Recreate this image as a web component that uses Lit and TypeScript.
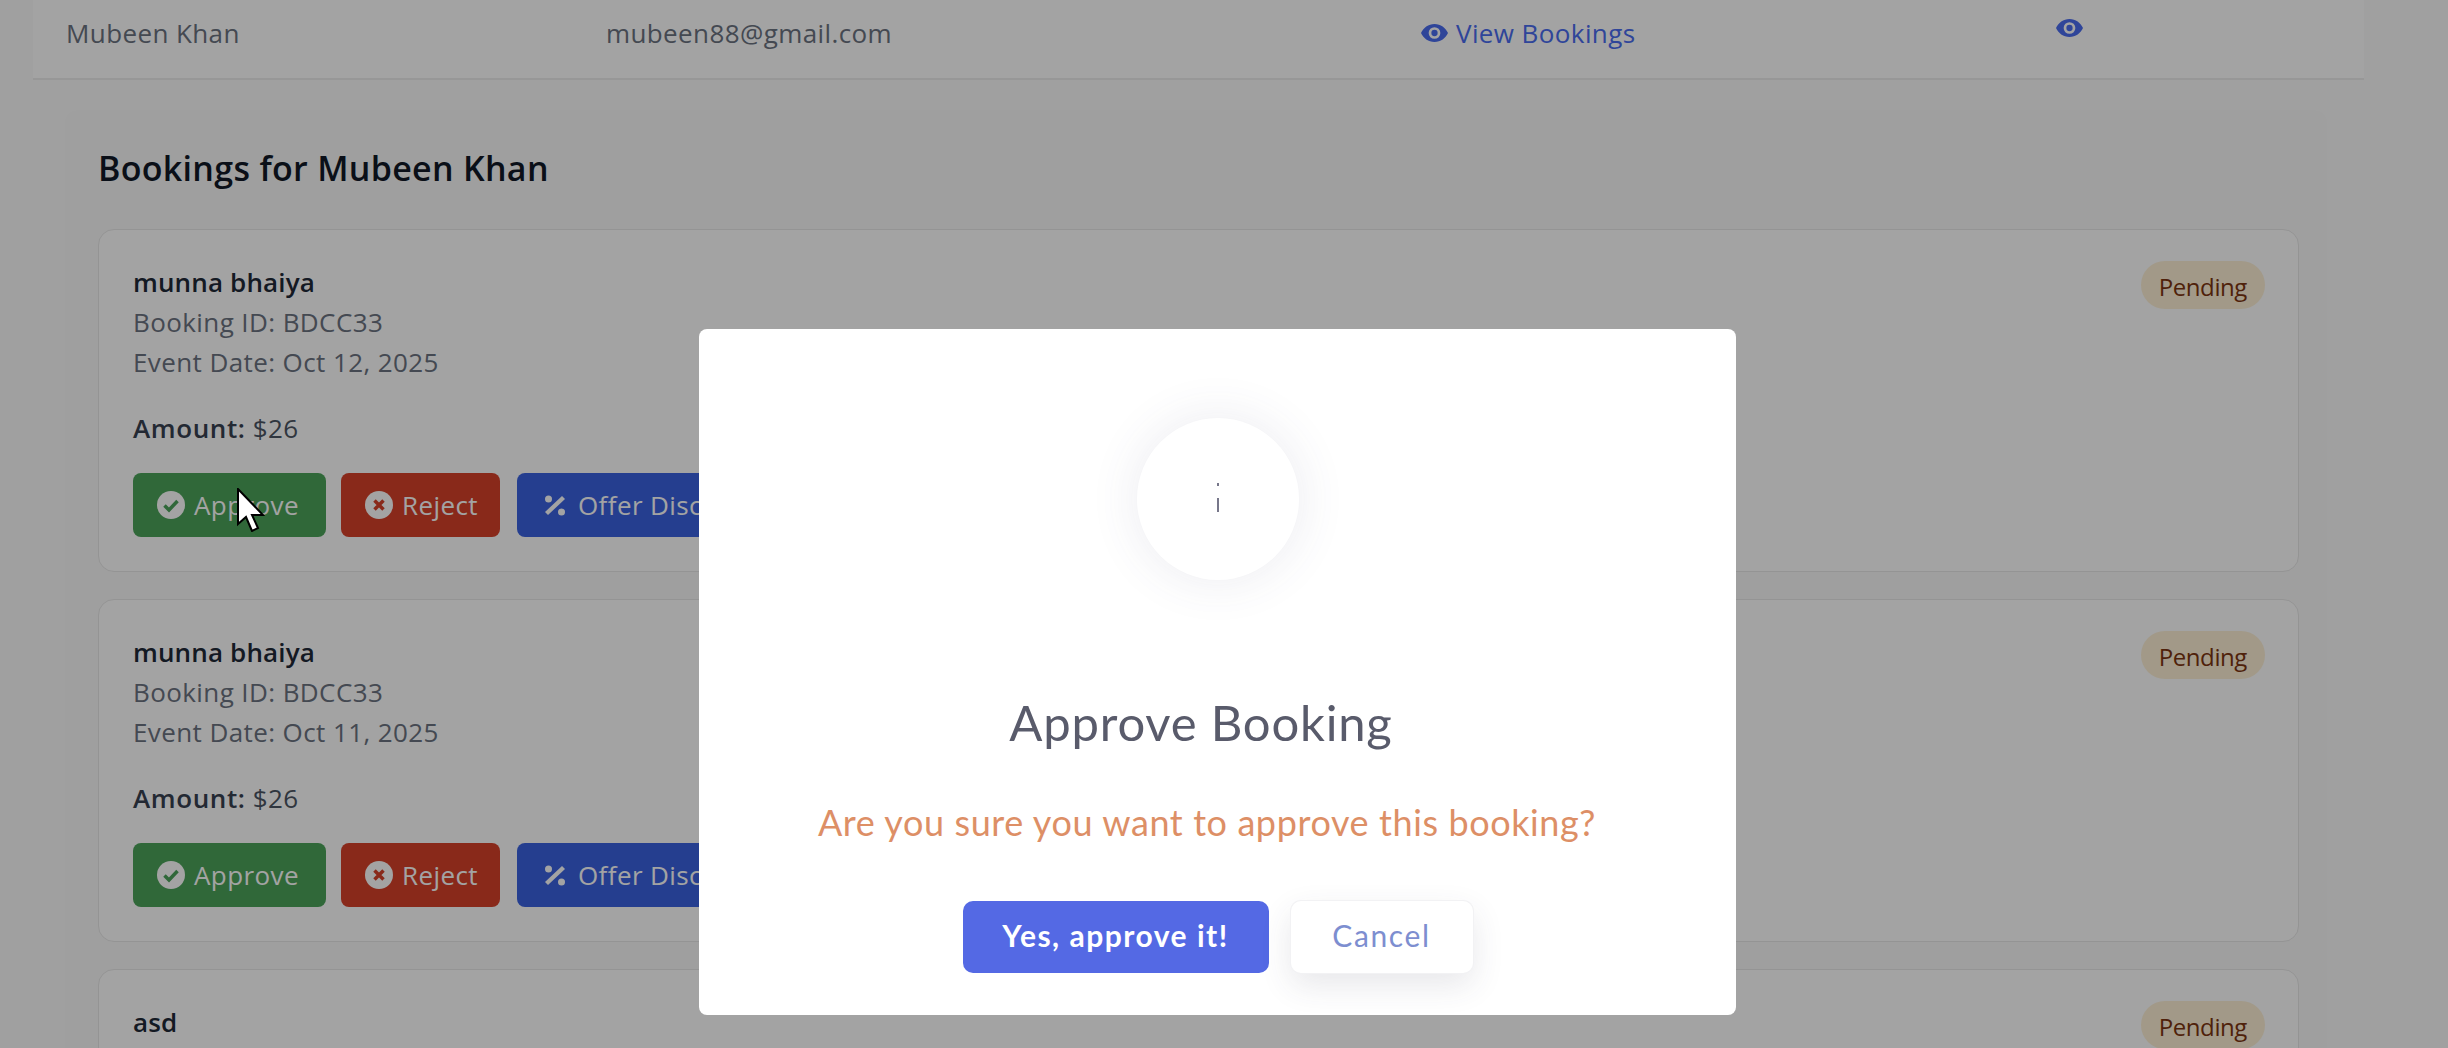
import { LitElement, html, css, svg } from 'lit';
import { customElement } from 'lit/decorators.js';

const eye = svg`<path fill-rule="evenodd" d="M12 0C6.5 0 2 3.4 0 8c2 4.6 6.500 8 12 8s10-3.400 12-8c-2-4.600-6.500-8-12-8zm0 2.800a5.200 5.200 0 1 1 0 10.400 5.200 5.200 0 0 1 0-10.400z"/><circle cx="12" cy="8" r="2.800"/>`;

const bookings = [
  { name: 'munna bhaiya', id: 'BDCC33', date: 'Oct 12, 2025', amount: '$26' },
  { name: 'munna bhaiya', id: 'BDCC33', date: 'Oct 11, 2025', amount: '$26' },
];

@customElement('app-root')
export class AppRoot extends LitElement {
  static override styles = css`
    :host {
      display: block;
      position: relative;
      height: 1048px;
      overflow: hidden;
      background: #fbfbfb;
      font-family: 'Open Sans', 'Noto Sans', sans-serif;
      font-size: 26px;
      letter-spacing: 0.4px;
    }
    .table {
      margin-left: 33px;
      width: 2331px;
    }
    .row {
      display: grid;
      grid-template-columns: 540px 815px 635px 1fr;
      height: 80px;
      padding: 0 0 12px 33px;
      align-items: center;
      background: #fff;
      border-bottom: 2px solid #ececec;
      box-sizing: border-box;
      color: #6b7280;
    }
    .link {
      display: flex;
      align-items: center;
      gap: 8px;
      color: #4a6cf0;
    }
    .eye {
      width: 27px;
      height: 18px;
      fill: #4a6cf0;
    }
    .row .lone {
      margin-top: -10px;
      display: flex;
    }
    .panel {
      margin: 30px 0 0 32px;
      width: 2262px;
      padding: 33px 33px 0;
      box-sizing: border-box;
      background: #f9f9f9;
      border-radius: 12px;
    }
    h2 {
      margin: 0 0 36px;
      font-size: 34px;
      line-height: 50px;
      font-weight: 600;
      letter-spacing: 0.3px;
      color: #111827;
    }
    .cards {
      display: flex;
      flex-direction: column;
      gap: 27px;
      width: 2201px;
    }
    .card {
      display: flex;
      justify-content: space-between;
      align-items: flex-start;
      padding: 32px 34px 34px;
      background: #fff;
      border: 1px solid #e8e8e8;
      border-radius: 16px;
      line-height: 40px;
      box-sizing: border-box;
      color: #6b7280;
    }
    .name {
      font-weight: 600;
      letter-spacing: 0.15px;
      color: #1f2937;
    }
    .amount {
      margin-top: 26px;
      color: #4b5563;
    }
    .amount b {
      font-weight: 600;
      letter-spacing: 0.6px;
      color: #374151;
    }
    .actions {
      display: flex;
      gap: 14px;
      margin-top: 25px;
    }
    .btn {
      display: flex;
      align-items: center;
      gap: 9px;
      height: 64px;
      padding: 0 24px;
      border-radius: 8px;
      color: #fff;
      box-sizing: border-box;
      white-space: nowrap;
    }
    .btn svg {
      width: 28px;
      height: 28px;
      flex: none;
    }
    .approve { background: #4ba35a; width: 193px; }
    .reject { background: #d6412a; width: 159px; margin-left: 1px; }
    .offer { background: #3a62e0; margin-left: 3px; }
    .badge {
      margin: -1px -1px 0 0;
      padding: 0 18px;
      height: 48px;
      line-height: 52px;
      border-radius: 24px;
      background: #fdf0d5;
      color: #7c3410;
      font-size: 24px;
      font-weight: 500;
      letter-spacing: -0.4px;
    }
    .overlay {
      position: absolute;
      inset: 0;
      background: rgba(0, 0, 0, 0.36);
    }
    .cursor {
      position: absolute;
      left: 237px;
      top: 488px;
      width: 28px;
      height: 44px;
    }
    .dialog {
      position: absolute;
      left: 699px;
      top: 329px;
      width: 1037px;
      height: 686px;
      padding-top: 89px;
      box-sizing: border-box;
      display: flex;
      flex-direction: column;
      align-items: center;
      background: #fff;
      border-radius: 8px;
      font-family: 'Lato', 'Noto Sans', sans-serif;
      letter-spacing: 0;
    }
    .ring {
      position: relative;
      width: 162px;
      height: 162px;
      flex: none;
      border-radius: 50%;
      background: #fff;
      box-shadow: 0 0 50px rgba(70, 70, 120, 0.11);
    }
    .tick {
      position: absolute;
      left: 80px;
      width: 2px;
      background: #77778a;
    }
    .tick.a { top: 65px; height: 3px; }
    .tick.b { top: 80px; height: 14px; }
    .title {
      margin: 112px 33px 0 0;
      font-size: 49px;
      line-height: 60px;
      color: #595b6b;
      letter-spacing: 0.8px;
    }
    .message {
      margin: 45px 21px 0 0;
      font-size: 36px;
      line-height: 50px;
      color: #dd8f66;
      letter-spacing: 0.6px;
    }
    .choices {
      display: flex;
      gap: 22px;
      margin-top: 54px;
    }
    .choices button {
      height: 72px;
      border: 0;
      border-radius: 10px;
      font: inherit;
      font-size: 30px;
      padding: 0 0 5px;
    }
    .yes {
      width: 306px;
      background: #5469e4;
      color: #fff;
      font-weight: 700 !important;
      letter-spacing: 1.5px;
    }
    .cancel {
      width: 182px;
      background: #fff;
      color: #7d8ed0;
      letter-spacing: 1.6px;
      box-shadow: 0 0 0 1px #f2f2f4, 0 12px 32px rgba(60, 60, 80, 0.12);
    }
  `;

  private card(b: (typeof bookings)[number]) {
    return html`
      <div class="card">
        <div>
          <div class="name">${b.name}</div>
          <div>Booking ID: ${b.id}</div>
          <div>Event Date: ${b.date}</div>
          <div class="amount"><b>Amount:</b> ${b.amount}</div>
          <div class="actions">
            <div class="btn approve">
              <svg viewBox="0 0 28 28">
                <circle cx="14" cy="14" r="14" fill="#fff" />
                <path d="M7.500 14.500l4.500 4.500 8.500-9" fill="none" stroke="#4ba35a" stroke-width="3.500" />
              </svg>
              Approve
            </div>
            <div class="btn reject">
              <svg viewBox="0 0 28 28">
                <circle cx="14" cy="14" r="14" fill="#fff" />
                <path d="M9.500 9.500l9 9m0-9l-9 9" fill="none" stroke="#d6412a" stroke-width="3.500" />
              </svg>
              Reject
            </div>
            <div class="btn offer">
              <svg viewBox="0 0 28 28" fill="#fff">
                <circle cx="7.500" cy="8" r="3.500" />
                <circle cx="20.500" cy="21" r="3.500" />
                <path d="M21 5l3 3L7 24l-3-3z" />
              </svg>
              Offer Discount
            </div>
          </div>
        </div>
        <div class="badge">Pending</div>
      </div>
    `;
  }

  override render() {
    return html`
      <div class="table">
        <div class="row">
          <div>Mubeen Khan</div>
          <div>mubeen88@gmail.com</div>
          <div class="link"><svg class="eye" viewBox="0 0 24 16">${eye}</svg>View Bookings</div>
          <div class="lone"><svg class="eye" viewBox="0 0 24 16">${eye}</svg></div>
        </div>
        <div class="panel">
          <h2>Bookings for Mubeen Khan</h2>
          <div class="cards">
            ${bookings.map((b) => this.card(b))}
            <div class="card">
              <div class="name">asd</div>
              <div class="badge">Pending</div>
            </div>
          </div>
        </div>
      </div>
      <div class="overlay"></div>
      <svg class="cursor" viewBox="0 0 28 44">
        <path d="M1 1v35l8-7 6 14 6-3-6-13h11z" fill="#fff" stroke="#000" stroke-width="2" />
      </svg>
      <div class="dialog">
        <div class="ring"><i class="tick a"></i><i class="tick b"></i></div>
        <div class="title">Approve Booking</div>
        <div class="message">Are you sure you want to approve this booking?</div>
        <div class="choices">
          <button class="yes">Yes, approve it!</button>
          <button class="cancel">Cancel</button>
        </div>
      </div>
    `;
  }
}
